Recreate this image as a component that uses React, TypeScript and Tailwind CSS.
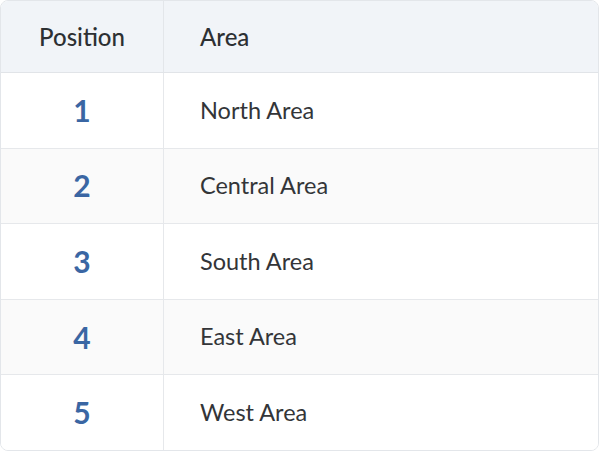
import React from "react";

const rows = [
  { n: "1", a: "North Area" },
  { n: "2", a: "Central Area" },
  { n: "3", a: "South Area" },
  { n: "4", a: "East Area" },
  { n: "5", a: "West Area" },
];

export default function App() {
  return (
    <div className="w-[600px] h-[452px] bg-white" style={{ fontFamily: "Lato, 'Noto Sans', sans-serif" }}>
      <div className="w-[599px] h-[451px] border border-[#e3e6ea] rounded-lg overflow-hidden flex flex-col">
        <div className="flex h-[72px] bg-[#f1f4f8] border-b border-[#e1e4e8]">
          <div className="w-[163px] border-r border-[#e3e6ea] flex items-center justify-center text-[24px] font-medium text-[#2d3033]">
            Position
          </div>
          <div className="flex-1 flex items-center pl-[36px] text-[24px] font-medium text-[#2d3033]">Area</div>
        </div>
        {rows.map((r, i) => (
          <div
            key={r.n}
            className={`flex flex-1 ${i < rows.length - 1 ? "border-b border-[#e6e8eb]" : ""} ${i % 2 === 1 ? "bg-[#fafafa]" : "bg-white"}`}
          >
            <div className="w-[163px] border-r border-[#e6e8eb] flex items-center justify-center text-[30px] font-bold text-[#3a66a3]">
              {r.n}
            </div>
            <div className="flex-1 flex items-center pl-[36px] text-[23.5px] text-[#333538]">{r.a}</div>
          </div>
        ))}
      </div>
    </div>
  );
}
